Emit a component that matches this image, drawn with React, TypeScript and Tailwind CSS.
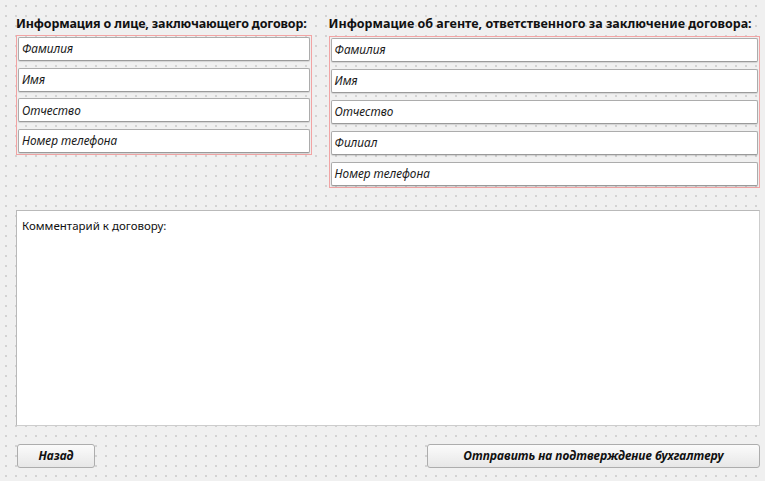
const font = { fontFamily: '"Noto Sans", "Open Sans", sans-serif' };

function Field({ label }: { label: string }) {
  return (
    <div className="flex h-6 items-center rounded-[2px] border border-[#acacac] border-b-[#9a9a9a] bg-white px-[3px] text-[11.8px] italic text-[#1a1a1a] shadow-[0_1px_1px_rgba(0,0,0,0.12)]">
      {label}
    </div>
  );
}

function Btn({ label, className }: { label: string; className: string }) {
  return (
    <button
      className={`flex h-6 items-center justify-center rounded-[3px] border border-[#adadad] bg-[linear-gradient(#fbfbfb,#e7e7e7)] text-[12px] font-bold italic text-[#111] ${className}`}
    >
      {label}
    </button>
  );
}

export default function App() {
  return (
    <div
      style={font}
      className="flex h-[481px] w-[765px] flex-col bg-[#f0f0f0] bg-[radial-gradient(circle,#d2d2d2_0.7px,transparent_0.9px)] bg-[size:10px_10px] bg-[position:1px_1px] pl-4 pr-[5px] text-[#111]"
    >
      <div className="flex gap-[17px] pt-[14px]">
        <div className="w-[296px]">
          <h2 className="h-[21px] whitespace-nowrap text-[12.5px] font-bold leading-[20px] tracking-[-0.15px]">Информация о лице, заключающего договор:</h2>
          <div className="flex flex-col gap-[6.7px] border border-[#f2a4a4] p-px">
            <Field label="Фамилия" />
            <Field label="Имя" />
            <Field label="Отчество" />
            <Field label="Номер телефона" />
          </div>
        </div>
        <div className="w-[432px]">
          <h2 className="h-[22px] whitespace-nowrap text-[12.5px] font-bold leading-[20px]">Информацие об агенте, ответственного за заключение договора:</h2>
          <div className="flex flex-col gap-[7px] border border-[#f2a4a4] p-px">
            <Field label="Фамилия" />
            <Field label="Имя" />
            <Field label="Отчество" />
            <Field label="Филиал" />
            <Field label="Номер телефона" />
          </div>
        </div>
      </div>
      <div className="mt-[22px] h-[216px] border border-[#cdcdcd] border-l-[#b9b9b9] border-t-[#b9b9b9] bg-white px-[5px] pt-[6px] text-[11.5px]">
        Комментарий к договору:
      </div>
      <div className="mt-[18px] flex justify-between pl-px">
        <Btn label="Назад" className="w-[78px]" />
        <Btn label="Отправить на подтверждение бухгалтеру" className="w-[333px]" />
      </div>
    </div>
  );
}
